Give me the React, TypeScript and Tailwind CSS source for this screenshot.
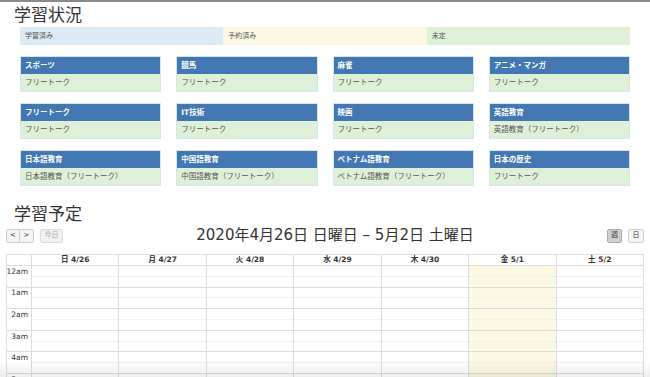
import React from 'react';

const jp = { fontFamily: '"DejaVu Sans", "Noto Sans CJK JP", sans-serif' };

const topics = [
  ['スポーツ', 'フリートーク'],
  ['競馬', 'フリートーク'],
  ['麻雀', 'フリートーク'],
  ['アニメ・マンガ', 'フリートーク'],
  ['フリートーク', 'フリートーク'],
  ['IT技術', 'フリートーク'],
  ['映画', 'フリートーク'],
  ['英語教育', '英語教育（フリートーク）'],
  ['日本語教育', '日本語教育（フリートーク）'],
  ['中国語教育', '中国語教育（フリートーク）'],
  ['ベトナム語教育', 'ベトナム語教育（フリートーク）'],
  ['日本の歴史', 'フリートーク'],
];

const days = ['日 4/26', '月 4/27', '火 4/28', '水 4/29', '木 4/30', '金 5/1', '土 5/2'];
const hours = ['12am', '1am', '2am', '3am', '4am', '5am', '6am'];

const TopicCard = ({ title, body }: { title: string; body: string }) => (
  <div className="border border-[#d6e4ef]">
    <div className="h-[17px] bg-[#4277b2] text-white font-bold text-[7.5px] flex items-center px-[4px]">
      {title}
    </div>
    <div className="h-[17px] bg-[#dff0d8] text-[#555] text-[7.5px] flex items-center px-[4px]">
      {body}
    </div>
  </div>
);

const Calendar = () => (
  <div className="mx-[6px] border border-[#ddd] text-[#333]">
    <div className="flex h-[11px] border-b border-[#ddd] text-[7.5px] font-bold">
      <div className="w-[25px] border-r border-[#ddd]"></div>
      {days.map(d => (
        <div key={d} className="flex-1 border-r border-[#ddd] last:border-r-0 flex items-center justify-center">
          {d}
        </div>
      ))}
    </div>
    <div className="flex">
      <div className="w-[25px] border-r border-[#ddd]">
        {hours.map(h => (
          <div key={h} className="h-[21.6px] border-b border-[#ddd]">
            <div className="h-[10.8px] flex items-center justify-end pr-[3px] text-[7.5px] font-normal">
              {h}
            </div>
          </div>
        ))}
      </div>
      {days.map((d, i) => (
        <div
          key={d}
          className={
            i === 5
              ? 'flex-1 border-r border-[#ddd] bg-[#fcf8e3]'
              : 'flex-1 border-r border-[#ddd] last:border-r-0'
          }
        >
          {hours.map(h => (
            <div key={h} className="h-[21.6px] border-b border-[#ddd]">
              <div className="h-[10.8px] border-b border-[#f0f0f0]"></div>
            </div>
          ))}
        </div>
      ))}
    </div>
  </div>
);

const App = () => {
  return (
    <div className="relative h-[377px] overflow-hidden bg-white border-t-2 border-[#8a8a8a]" style={jp}>
      <h1 className="text-[17px] leading-none text-[#333] pl-[14px] pt-[5px]">学習状況</h1>
      <div className="mx-[20px] mt-[3px] h-[18px] grid grid-cols-3 text-[7px] text-[#555]">
        <div className="bg-[#dceaf4] flex items-center px-[5px]">学習済み</div>
        <div className="bg-[#fcf8e3] flex items-center px-[5px]">予約済み</div>
        <div className="bg-[#dff0d8] flex items-center px-[5px]">未定</div>
      </div>
      <div className="mx-[20px] mt-[11px] grid grid-cols-4 gap-x-[15px] gap-y-[11px]">
        {topics.map(([t, b]) => (
          <TopicCard key={t} title={t} body={b} />
        ))}
      </div>
      <h2 className="text-[17px] leading-none text-[#333] pl-[14px] mt-[20px]">学習予定</h2>
      <div className="flex items-center mx-[6px] mt-[4px] h-[17px]">
        <div className="flex items-center">
          <div className="flex h-[14px] border border-[#ccc] rounded-[2px] bg-[#f4f4f4] text-[7px] text-[#333]">
            <div className="w-[13px] flex items-center justify-center border-r border-[#ccc]">&lt;</div>
            <div className="w-[13px] flex items-center justify-center">&gt;</div>
          </div>
          <div className="ml-[6px] h-[14px] w-[23px] border border-[#ddd] rounded-[2px] bg-[#f0f0f0] text-[7px] text-[#aaa] flex items-center justify-center">
            今日
          </div>
        </div>
        <div className="flex-1 text-center text-[15px] leading-none text-[#333]">
          2020年4月26日 日曜日 – 5月2日 土曜日
        </div>
        <div className="flex items-center gap-[6px]">
          <div className="h-[14px] w-[15px] border border-[#aaa] rounded-[2px] bg-[#cfcfcf] text-[7px] text-[#333] flex items-center justify-center">
            週
          </div>
          <div className="h-[14px] w-[16px] border border-[#ccc] rounded-[2px] bg-[#f4f4f4] text-[7px] text-[#333] flex items-center justify-center">
            日
          </div>
        </div>
      </div>
      <div className="mt-[10px]">
        <Calendar />
      </div>
      <div className="absolute left-0 right-0 bottom-0 h-[16px] bg-gradient-to-b from-transparent to-[#00000012] pointer-events-none"></div>
    </div>
  );
};

export default App;
